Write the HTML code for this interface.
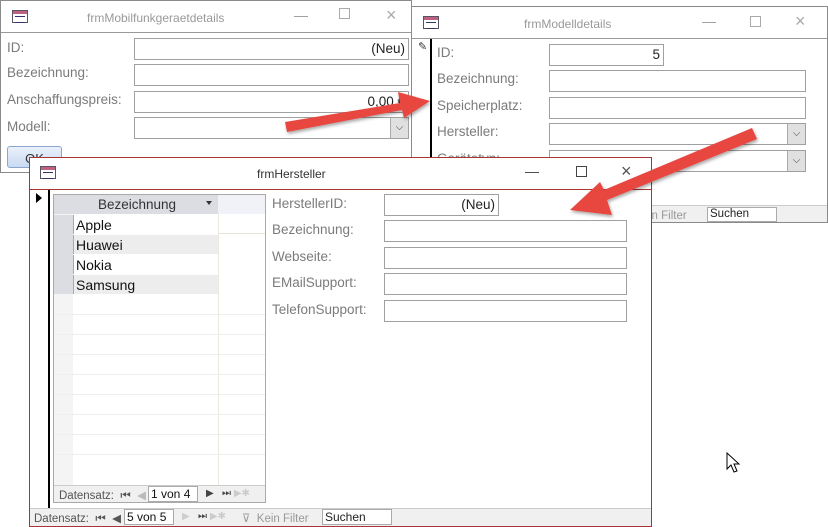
<!DOCTYPE html>
<html><head><meta charset="utf-8"><style>
*{margin:0;padding:0;box-sizing:border-box}
body{width:828px;height:527px;background:#fff;position:relative;overflow:hidden;font-family:"Liberation Sans","DejaVu Sans",sans-serif;font-size:13px;color:#333}
.a{position:absolute}
.win{position:absolute;background:#fff;border:1px solid #8a8a8a}
.tl{position:absolute;font-size:12px;color:#999}
.lb{position:absolute;font-size:13.5px;color:#7b7b7b}
.in{position:absolute;border:1px solid #a0a0a0;background:#fff;height:22px;font-size:13.5px;color:#222;text-align:right;padding:2px 3px;line-height:16px}
.dd{position:absolute;right:0;top:0;width:18px;height:20px;background:#e0e0e0;border-left:1px solid #aaa;font-size:10px;text-align:center;line-height:20px;color:#444}
.ico{position:absolute;width:16px;height:13px;border:1px solid #556;background:#fff}
.ico:before{content:"";position:absolute;left:0;right:0;top:0;height:3px;background:#c06080}
.ico:after{content:"";position:absolute;left:2px;top:5px;width:10px;height:5px;border-top:1px solid #336;border-bottom:1px solid #336}
.btn{position:absolute;font-size:14px;color:#999}
.row{position:absolute;left:0;width:213px;height:20px;border-bottom:1px solid #e8e4d8}
.nav{position:absolute;background:#f0f0f0;border-top:1px solid #ccc;font-size:11.5px;color:#555}
</style></head><body>

<!-- Window 1 -->
<div class="win" style="left:0;top:0;width:412px;height:173px">
  <div class="ico" style="left:11px;top:9px"></div>
  <div class="tl" style="left:86px;top:10px">frmMobilfunkgeraetdetails</div>
  <div class="btn" style="left:293px;top:6px">—</div>
  <div class="btn" style="left:338px;top:7px;width:11px;height:11px;border:1px solid #aaa"></div>
  <div class="btn" style="left:385px;top:4px;font-size:18px;color:#aaa">×</div>
  <div class="a" style="left:0;top:31px;width:410px;border-top:1px solid #999"></div>
  <div class="lb" style="left:6px;top:39px">ID:</div>
  <div class="in" style="left:133px;top:37px;width:275px">(Neu)</div>
  <div class="lb" style="left:6px;top:64px">Bezeichnung:</div>
  <div class="in" style="left:133px;top:63px;width:275px"></div>
  <div class="lb" style="left:6px;top:91px">Anschaffungspreis:</div>
  <div class="in" style="left:133px;top:90px;width:275px">0,00 €</div>
  <div class="lb" style="left:6px;top:118px">Modell:</div>
  <div class="in" style="left:133px;top:116px;width:275px"><div class="dd">⌵</div></div>
  <div class="a" style="left:6px;top:145px;width:55px;height:22px;border:1px solid #8aa6cc;border-radius:3px;background:linear-gradient(#eaf1fb,#c9daf2);font-size:13px;text-align:center;padding-top:4px">OK</div>
</div>

<!-- Window 2 -->
<div class="win" style="left:411px;top:6px;width:417px;height:217px">
  <div class="ico" style="left:11px;top:9px"></div>
  <div class="tl" style="left:112px;top:10px">frmModelldetails</div>
  <div class="btn" style="left:290px;top:6px">—</div>
  <div class="btn" style="left:338px;top:9px;width:11px;height:11px;border:1px solid #aaa"></div>
  <div class="btn" style="left:383px;top:4px;font-size:18px;color:#aaa">×</div>
  <div class="a" style="left:0;top:31px;width:415px;border-top:1px solid #999"></div>
  <div class="a" style="left:18px;top:32px;height:170px;border-left:2px solid #000"></div>
  <div class="a" style="left:6px;top:33px;font-size:11px">✎</div>
  <div class="lb" style="left:25px;top:38px">ID:</div>
  <div class="in" style="left:137px;top:37px;width:115px">5</div>
  <div class="lb" style="left:25px;top:64px">Bezeichnung:</div>
  <div class="in" style="left:137px;top:63px;width:257px"></div>
  <div class="lb" style="left:25px;top:91px">Speicherplatz:</div>
  <div class="in" style="left:137px;top:90px;width:257px"></div>
  <div class="lb" style="left:25px;top:117px">Hersteller:</div>
  <div class="in" style="left:137px;top:116px;width:257px"><div class="dd">⌵</div></div>
  <div class="lb" style="left:25px;top:144px">Gerätetyp:</div>
  <div class="in" style="left:137px;top:143px;width:257px"><div class="dd">⌵</div></div>
  <div class="nav" style="left:0;top:198px;width:415px;height:17px"></div>
  <div class="a" style="left:237px;top:203px;font-size:11.5px;color:#999">in Filter</div>
  <div class="a" style="left:295px;top:200px;width:70px;height:15px;border:1px solid #aaa;background:#fff;font-size:11.5px;padding-left:2px;color:#222">Suchen</div>
</div>

<!-- Window 3 -->
<div class="win" style="left:29px;top:157px;width:623px;height:370px;border-color:#a33">
  <div class="ico" style="left:10px;top:8px"></div>
  <div class="a" style="left:227px;top:9px;font-size:12px;color:#333">frmHersteller</div>
  <div class="btn" style="left:495px;top:5px;color:#444">—</div>
  <div class="btn" style="left:546px;top:8px;width:11px;height:11px;border:1px solid #444"></div>
  <div class="btn" style="left:591px;top:3px;font-size:18px;color:#555">×</div>
  <div class="a" style="left:0;top:31px;width:621px;border-top:1px solid #a33"></div>
  <div class="a" style="left:18px;top:32px;height:320px;border-left:2px solid #000"></div>
  <div class="a" style="left:6px;top:35px;width:0;height:0;border-left:6px solid #000;border-top:5px solid transparent;border-bottom:5px solid transparent"></div>

  <!-- subform -->
  <div class="a" style="left:23px;top:36px;width:213px;height:309px;border:1px solid #aaa;background:#fff;overflow:hidden">
    <div class="a" style="left:0;top:0;width:19px;height:290px;background:#f4f4f4"></div>
    <div class="a" style="left:0;top:0;width:164px;height:19px;background:#dcdde3"></div>
    <div class="a" style="left:164px;top:0;width:49px;height:19px;background:#f0f2f7"></div>
    <div class="a" style="left:44px;top:2px;font-size:13.5px;color:#333">Bezeichnung</div>
    <div class="a" style="left:152px;top:6px;width:0;height:0;border-top:4px solid #333;border-left:3px solid transparent;border-right:3px solid transparent"></div>
    <div class="row" style="top:19px"></div>
    <div class="a" style="left:19px;top:20px;width:145px;height:19px;background:#fff;border-left:1px solid #aaa"></div>
    <div class="a" style="left:19px;top:40px;width:145px;height:19px;background:#ededed;border-left:1px solid #aaa"></div>
    <div class="a" style="left:19px;top:60px;width:145px;height:19px;background:#fff;border-left:1px solid #aaa"></div>
    <div class="a" style="left:19px;top:80px;width:145px;height:19px;background:#ededed;border-left:1px solid #aaa"></div>
    <div class="a" style="left:0;top:20px;width:19px;height:79px;background:#dcdde3"></div>
    <div class="a" style="left:164px;top:19px;height:272px;border-left:1px solid #ece8dc"></div>
    <div class="a" style="left:22px;top:22px;font-size:14px;color:#111">Apple</div>
    <div class="a" style="left:22px;top:42px;font-size:14px;color:#111">Huawei</div>
    <div class="a" style="left:22px;top:62px;font-size:14px;color:#111">Nokia</div>
    <div class="a" style="left:22px;top:82px;font-size:14px;color:#111">Samsung</div>
    <div class="a" style="left:0;top:119px;width:213px;border-top:1px solid #eee"></div>
    <div class="a" style="left:0;top:139px;width:213px;border-top:1px solid #eee"></div>
    <div class="a" style="left:0;top:159px;width:213px;border-top:1px solid #eee"></div>
    <div class="a" style="left:0;top:179px;width:213px;border-top:1px solid #eee"></div>
    <div class="a" style="left:0;top:199px;width:213px;border-top:1px solid #eee"></div>
    <div class="a" style="left:0;top:219px;width:213px;border-top:1px solid #eee"></div>
    <div class="a" style="left:0;top:239px;width:213px;border-top:1px solid #eee"></div>
    <div class="a" style="left:0;top:259px;width:213px;border-top:1px solid #eee"></div>
    <div class="nav" style="left:0;top:290px;width:213px;height:19px"></div>
    <div class="a" style="left:5px;top:293px;font-size:11.5px;color:#555">Datensatz: &nbsp;⏮ &nbsp;<span style="color:#bbb">◀</span></div>
    <div class="a" style="left:94px;top:291px;width:50px;height:16px;border:1px solid #aaa;background:#fff;font-size:12px;padding-left:2px;color:#111">1 von 4</div>
    <div class="a" style="left:152px;top:293px;font-size:10px;color:#444">▶ &nbsp;&nbsp;⏭ <span style="color:#ccc">▶✱</span></div>
  </div>

  <div class="lb" style="left:242px;top:38px">HerstellerID:</div>
  <div class="in" style="left:354px;top:36px;width:115px">(Neu)</div>
  <div class="lb" style="left:242px;top:64px">Bezeichnung:</div>
  <div class="in" style="left:354px;top:62px;width:243px"></div>
  <div class="lb" style="left:242px;top:91px">Webseite:</div>
  <div class="in" style="left:354px;top:89px;width:243px"></div>
  <div class="lb" style="left:242px;top:117px">EMailSupport:</div>
  <div class="in" style="left:354px;top:115px;width:243px"></div>
  <div class="lb" style="left:242px;top:144px">TelefonSupport:</div>
  <div class="in" style="left:354px;top:142px;width:243px"></div>

  <div class="nav" style="left:0;top:350px;width:621px;height:18px"></div>
  <div class="a" style="left:4px;top:353px;font-size:11.5px;color:#555">Datensatz: &nbsp;⏮ &nbsp;◀</div>
  <div class="a" style="left:94px;top:351px;width:50px;height:16px;border:1px solid #aaa;background:#fff;font-size:12px;padding-left:2px;color:#111">5 von 5</div>
  <div class="a" style="left:152px;top:353px;font-size:10px;color:#444"><span style="color:#ccc">▶</span> &nbsp;&nbsp;⏭ <span style="color:#ccc">▶✱</span></div>
  <div class="a" style="left:212px;top:353px;font-size:11.5px;color:#999">⊽ &nbsp;Kein Filter</div>
  <div class="a" style="left:292px;top:351px;width:70px;height:16px;border:1px solid #aaa;background:#fff;font-size:12px;padding-left:2px;color:#222">Suchen</div>
</div>

<!-- arrows -->
<svg class="a" style="left:0;top:0" width="828" height="527">
  <defs><filter id="s"><feDropShadow dx="1" dy="2" stdDeviation="1.5" flood-opacity="0.35"/></filter></defs>
  <g filter="url(#s)" fill="#e8463f">
    <path d="M285 122 L400 103 L398 92 L430 101 L404 118 L402 110 L287 132 Z"/>
    <path d="M752 128 L604 190 L600 182 L570 210 L612 215 L607 200 L757 139 Z"/>
  </g>
  <path d="M727 453 L727 469 L731 465 L734 472 L737 471 L734 464 L739 464 Z" fill="#fff" stroke="#000" stroke-width="1"/>
</svg>
</body></html>
